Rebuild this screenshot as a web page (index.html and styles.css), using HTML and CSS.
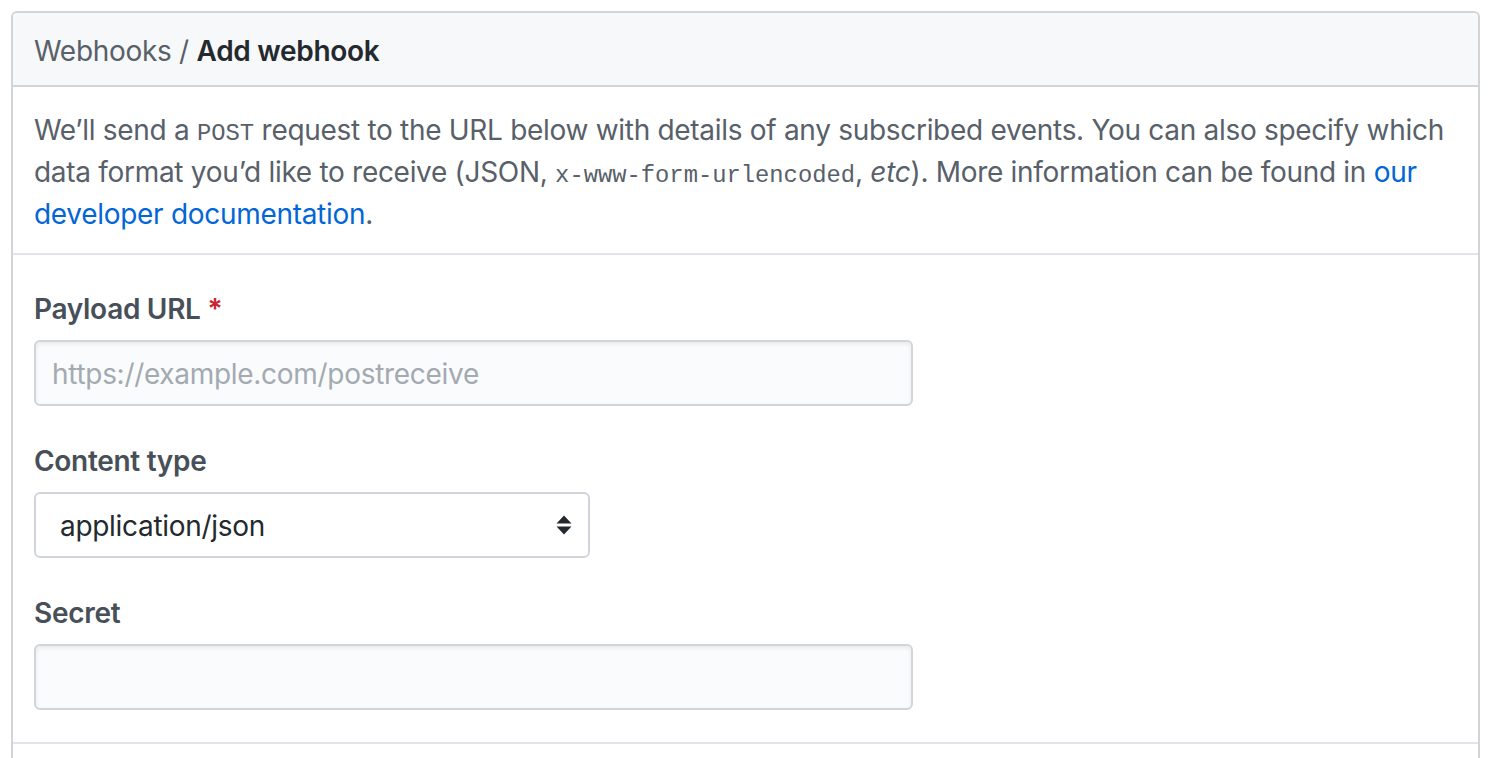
FILE: index.html
```html
<!DOCTYPE html>
<html>
<head>
<meta charset="utf-8">
<link rel="stylesheet" href="styles.css">
</head>
<body>
<div class="box">
  <div class="box-header">
    <span class="crumb">Webhooks</span> <span class="sep">/</span> <strong class="title">Add webhook</strong>
  </div>
  <div class="box-desc">
    <p>We’ll send a <code>POST</code> request to the URL below with details of any subscribed events. You can also specify which data format you’d like to receive (JSON, <code>x-www-form-urlencoded</code>, <em>etc</em>). More information can be found in <a href="#">our developer documentation</a>.</p>
  </div>
  <div class="box-form">
    <div class="group">
      <label class="label">Payload URL <span class="req">*</span></label>
      <input class="input" type="text" placeholder="https://example.com/postreceive">
    </div>
    <div class="group">
      <label class="label">Content type</label>
      <div class="select">
        <span>application/json</span>
        <svg class="arrows" width="16" height="20" viewBox="0 0 16 20"><path d="M8 0.5 L15.5 8.5 L0.5 8.5 Z M0.5 11.5 L15.5 11.5 L8 19.5 Z" fill="#24292e"/></svg>
      </div>
    </div>
    <div class="group">
      <label class="label">Secret</label>
      <input class="input" type="text">
    </div>
  </div>
  <div class="box-more"></div>
</div>
</body>
</html>
```
FILE: styles.css
```css
html, body {
  margin: 0;
  padding: 0;
  background: #fff;
}
body {
  padding: 11px 14px 0 11px;
  font-family: "Inter", "Liberation Sans", sans-serif;
  font-size: 28px;
  line-height: 42px;
  letter-spacing: -0.3px;
  color: #24292e;
}
.box {
  border: 2px solid #d1d5da;
  border-radius: 6px;
  border-bottom: none;
  border-bottom-left-radius: 0;
  border-bottom-right-radius: 0;
}
.box-header {
  background: #f6f8fa;
  padding: 17px 21px 13px;
  border-bottom: 2px solid #d1d5da;
  border-top-left-radius: 6px;
  border-top-right-radius: 6px;
}
.crumb, .sep {
  color: #586069;
}
.title {
  font-weight: 600;
  color: #24292e;
}
.box-desc {
  padding: 22px 21px 18px;
  border-bottom: 2px solid #e1e4e8;
  color: #586069;
}
.box-desc p {
  margin: 0;
}
code {
  font-family: "Liberation Mono", "DejaVu Sans Mono", monospace;
  font-size: 23.8px;
  line-height: 1;
  letter-spacing: 0;
}
a {
  color: #0366d6;
  text-decoration: none;
}
.box-form {
  padding: 31px 21px 32px;
  display: flex;
  flex-direction: column;
  gap: 32px;
  border-bottom: 2px solid #e1e4e8;
}
.group {
  display: flex;
  flex-direction: column;
  gap: 10px;
}
.label {
  padding-top: 2px;
  font-weight: 600;
  color: #474f58;
}
.req {
  color: #cb2431;
}
.input {
  box-sizing: border-box;
  width: 879px;
  height: 66px;
  margin: 0;
  border: 2px solid #d1d5da;
  border-radius: 6px;
  background: #fafbfc;
  box-shadow: inset 0 2px 4px rgba(27,31,35,0.075);
  padding: 2px 16px 0;
  font-family: inherit;
  font-size: 28px;
  letter-spacing: -0.3px;
  color: #24292e;
  outline: none;
}
.input::placeholder {
  color: #a3aab1;
}
.select {
  box-sizing: border-box;
  width: 556px;
  height: 66px;
  border: 2px solid #d1d5da;
  border-radius: 6px;
  background: #fff;
  padding: 2px 16px 0 24px;
  display: flex;
  align-items: center;
  justify-content: space-between;
  color: #24292e;
}
.arrows {
  display: block;
  margin-top: -2px;
}
.box-more {
  height: 60px;
}
```
